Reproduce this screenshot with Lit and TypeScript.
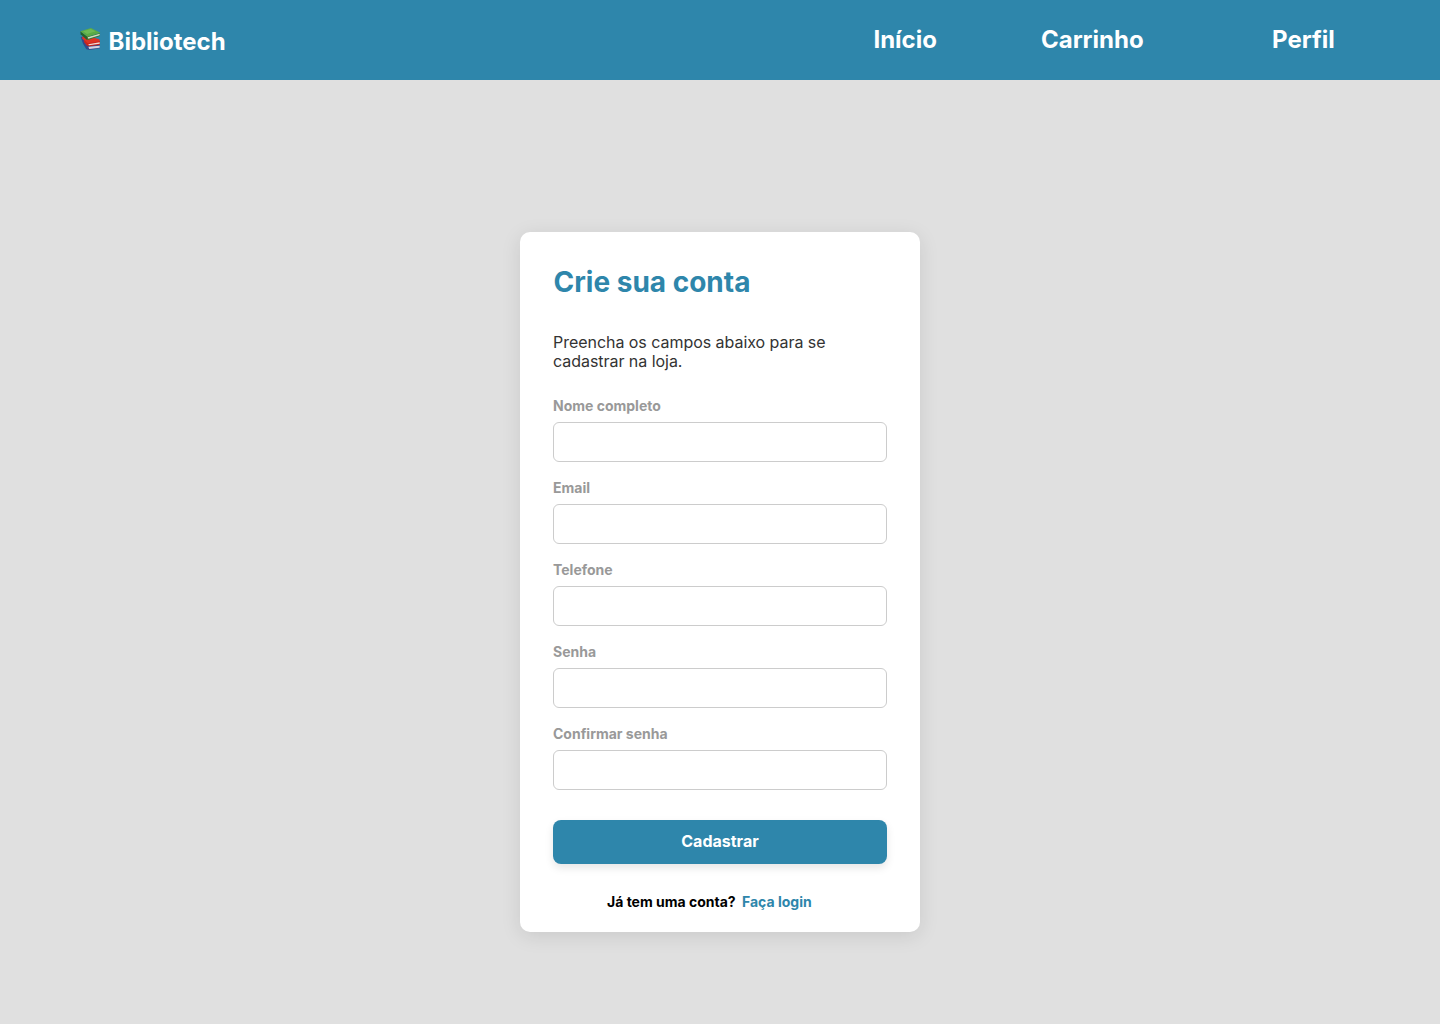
import { LitElement, html, css } from "lit";
import { customElement } from "lit/decorators.js";

const FIELDS = [
  { id: "name", label: "Nome completo", type: "text" },
  { id: "email", label: "Email", type: "email" },
  { id: "phone", label: "Telefone", type: "tel" },
  { id: "password", label: "Senha", type: "password" },
  { id: "confirm", label: "Confirmar senha", type: "password" },
];

@customElement("books-icon")
class BooksIcon extends LitElement {
  static styles = css`
    :host { display: block; width: 22px; height: 22px; }
    svg { display: block; width: 100%; height: 100%; }
  `;

  render() {
    return html`<svg viewBox="18 18 66 66" aria-hidden="true">
      <path d="M20 45 L26 44 L40 63 L76 66 L78 79 L46 84 L37 82 L27 65 Z" fill="#34498c" />
      <path d="M43 74 L77 71 L77 77 L46 81 Z" fill="#d5d2e0" />
      <path d="M26 43 L40 42 L76 52 L78 60 L46 67 L40 66 L24 49 Z" fill="#dd3325" />
      <path d="M30 54 L42 64 L78 58 L78 68 L45 73 L39 71 L30 60 Z" fill="#c9241e" />
      <path d="M43 67 L77 61 L77 65 L45 70 Z" fill="#efdcd8" />
      <path d="M19 28 L39 43 L41 53 L38 53 L20 37 Z" fill="#22642c" />
      <path d="M39 44 L78 33 L78 42 L41 54 Z" fill="#2f7a31" />
      <path d="M41 46 L77 35 L77 40 L43 50 Z" fill="#d3dcc6" />
      <path d="M19 28 L51 18 L79 32 L40 44 Z" fill="#5aab45" />
      <path d="M27 28 L50 21 L65 28 L39 36 Z" fill="#7cc45d" opacity=".6" />
    </svg>`;
  }
}

@customElement("app-root")
class AppRoot extends LitElement {
  static styles = css`
    :host {
      display: flex;
      flex-direction: column;
      height: 1024px;
      background: #e0e0e0;
      font-family: Inter, sans-serif;
      color: #000;
    }
    * { box-sizing: border-box; }
    .header {
      display: flex;
      justify-content: space-between;
      height: 80px;
      padding: 0 105.3px 0 80px;
      background: #2e86ab;
      color: #fff;
      font-size: 24px;
      line-height: 29px;
      font-weight: 700;
      flex: none;
    }
    .brand { display: flex; gap: 6.5px; padding-top: 27px; }
    .brand books-icon { margin-top: 1px; }
    .nav { display: flex; padding-top: 25px; }
    .nav a { color: inherit; text-decoration: none; }
    .nav a + a { margin-left: 104px; }
    .nav a:last-child { margin-left: 128.4px; }
    .main { display: flex; justify-content: center; padding-top: 152px; }
    .card {
      display: flex;
      flex-direction: column;
      width: 400px;
      height: 700px;
      padding: 33px;
      background: #fff;
      border-radius: 10px;
      box-shadow: 0 4px 20px rgba(0, 0, 0, 0.1);
    }
    h1 {
      margin: 0 0 0 0.5px;
      font-size: 28px;
      line-height: 34px;
      font-weight: 700;
      color: #2e86ab;
    }
    .intro {
      margin: 34px 0 0;
      width: 290px;
      font-size: 16px;
      line-height: 19px;
      font-weight: 400;
      letter-spacing: -0.04px;
      color: #333;
    }
    .form { display: flex; flex-direction: column; margin-top: 26px; }
    .field { display: flex; flex-direction: column; height: 82px; }
    .field label {
      height: 25px;
      font-size: 14px;
      line-height: 17px;
      font-weight: 700;
      color: #999;
    }
    .field input {
      height: 40px;
      padding: 0 12px;
      font: inherit;
      border: 1px solid #ccc;
      border-radius: 6px;
      background: #fff;
      outline: none;
    }
    .submit {
      height: 44px;
      margin-top: 13px;
      padding: 0 0 2px;
      border: 0;
      border-radius: 8px;
      background: #2e86ab;
      color: #fff;
      font: 700 16px/19px Inter, sans-serif;
      box-shadow: 0 4px 8px rgba(0, 0, 0, 0.1);
    }
    .login {
      display: flex;
      gap: 6.3px;
      margin: 29px 0 0 54px;
      font-size: 14px;
      line-height: 17px;
      font-weight: 700;
    }
    .login a { color: #2e86ab; text-decoration: none; }
  `;

  render() {
    return html`
      <header class="header">
        <div class="brand">
          <books-icon></books-icon>
          <span>Bibliotech</span>
        </div>
        <nav class="nav">
          <a href="#">Início</a><a href="#">Carrinho</a><a href="#">Perfil</a>
        </nav>
      </header>
      <main class="main">
        <section class="card">
          <h1>Crie sua conta</h1>
          <p class="intro">Preencha os campos abaixo para se cadastrar na loja.</p>
          <form class="form">
            ${FIELDS.map(
              (f) => html`<div class="field">
                <label for=${f.id}>${f.label}</label>
                <input id=${f.id} type=${f.type} />
              </div>`
            )}
            <button class="submit" type="button">Cadastrar</button>
          </form>
          <div class="login"><span>Já tem uma conta?</span><a href="#">Faça login</a></div>
        </section>
      </main>
    `;
  }
}
